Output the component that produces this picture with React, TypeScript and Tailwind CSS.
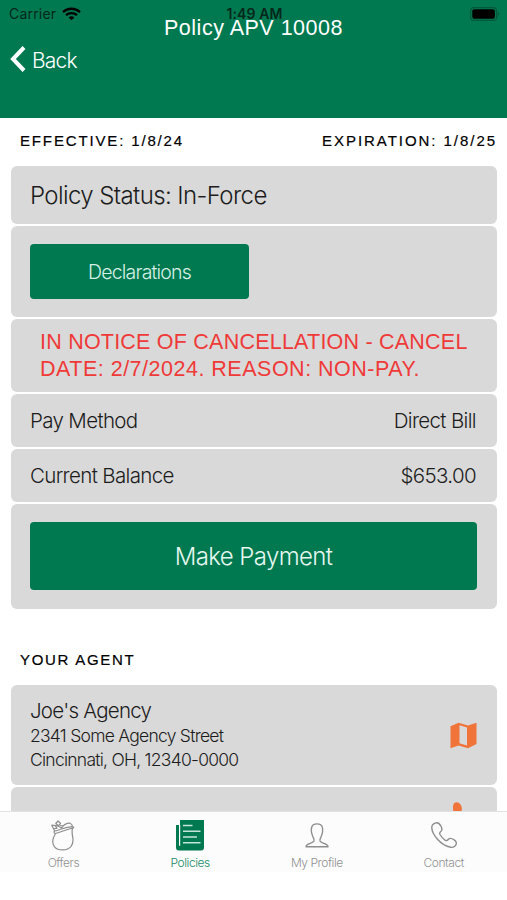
import type { ReactNode } from 'react';
import clsx from 'clsx';

const light = "font-['Inter','Liberation_Sans',sans-serif] font-light";
const label =
  "font-['Liberation_Sans',sans-serif] text-[15px] leading-[20px] text-black whitespace-nowrap [-webkit-text-stroke:0.2px_#000]";

const Card = ({ className, children }: { className?: string; children?: ReactNode }) => (
  <div className={clsx('w-[486px] shrink-0 rounded-[6px] bg-[#d9d9d9] text-[#1c1c1c]', light, className)}>{children}</div>
);

const StatusBar = () => (
  <div className="absolute inset-x-0 top-0 flex h-[27px] items-center justify-between pl-[9px] pr-[7px] font-['Inter','Liberation_Sans',sans-serif] text-[#06271b]">
    <div className="flex w-[150px] items-center gap-[6px]">
      <span className="text-[14px] tracking-[0.2px]">Carrier</span>
      <svg width="19" height="14" viewBox="0 0 19 14" fill="none" stroke="#000" strokeWidth="2.3">
        <path d="M1 5.1C5.8.6 13.2.6 18 5.1" />
        <path d="M4 8.2c3.1-2.9 7.900-2.900 11 0" />
        <path d="M9.500 13.200 6.700 10.400c1.600-1.400 4-1.400 5.600 0Z" fill="#000" stroke="none" />
      </svg>
    </div>
    <span className="text-[14px] font-semibold tracking-[0.100px]">1:49 AM</span>
    <div className="flex w-[150px] justify-end">
      <svg width="30" height="14" viewBox="0 0 30 14">
        <rect x="0.600" y="0.600" width="26" height="12.800" rx="3.500" fill="none" stroke="#02583d" strokeWidth="1.200" />
        <rect x="2.300" y="2.300" width="22.600" height="9.400" rx="2" fill="#000" />
        <path d="M28 5v4c1.700-.8 1.700-3.200 0-4Z" fill="#02583d" />
      </svg>
    </div>
  </div>
);

const OffersIcon = () => (
  <svg width="26" height="32" viewBox="0 0 26 32" fill="none" stroke="#8e8e8e" strokeWidth="1.200" strokeLinejoin="round">
    <path d="M5.500 13.500C11 12 16.500 9.500 22.500 8c-.8 3.500-.5 6 .3 9.500.6 4 .2 6.500-1.800 9-3.500 4.500-13 4.500-16.500.3C.8 22 3 17.500 5.500 13.500Z" />
    <path d="M5.500 13.500C4 13.500 3.500 12 4.700 11 10 10 15 6.800 22.500 6.600c1.500.2 1.500 1.500 0 1.700" />
    <path d="M4.700 11 1.800 5.200l5.700.6L12 8.300M5 5.500l2 2.800-3 .2M11.500 8.300C13 5 17 2.800 20 3.200c1.500.5 2.300 1.800 2.500 3.400M13.500 6 10 5.500" />
    <path d="m8 1 2.500 2.300L8.500 5.800 5.800 3.500Z" />
  </svg>
);

const PoliciesIcon = () => (
  <svg width="28" height="31" viewBox="0 0 28 31">
    <path d="M4 0h24v27.500a3 3 0 0 1-3 3H3a3 3 0 0 1-3-3V5h4Z" fill="#007950" />
    <path d="M3.600 5v20.800" stroke="#fff" strokeWidth="1.200" />
    <path d="M7 5.500h9.500M7 11.300h17.500M7 17h14M7 22.800h17.500" stroke="#c4e6d9" strokeWidth="1.500" />
  </svg>
);

const ProfileIcon = () => (
  <svg width="24" height="25" viewBox="0 0 24 25" fill="none" stroke="#8e8e8e" strokeWidth="1.400" strokeLinejoin="round">
    <path d="M1 23.800c.2-3.600 6.500-3 8-5.800.5-1.500-.3-2.600-1-4C6.500 10.500 5.800 7.500 6.600 4.500 7.200 2 9.300.9 12 .9s4.800 1.100 5.400 3.600c.8 3 .1 6-1.400 9.500-.7 1.400-1.500 2.500-1 4 1.500 2.800 7.800 2.200 8 5.800Z" />
  </svg>
);

const ContactIcon = () => (
  <svg width="26" height="27" viewBox="0 0 26 27" fill="none" stroke="#8e8e8e" strokeWidth="1.400" strokeLinejoin="round">
    <path d="M4.800.9C2 1.800.6 4 .8 6c.2 5.700 8 17 19 19.300 2.700.3 4.600-1.100 5.400-3.300.5-2-.2-3-2-4.200-2-1.300-4.500-1.900-5.700-.6-1 1.300-2 2-3.500 1-1.700-1.200-3.700-3.600-5-5.700-.8-1.500-.2-2.300 1-3.200 1.500-1.200.8-3.500-.2-5.500C8.500 1.500 7.200.3 4.800.9Z" />
  </svg>
);

const tabs = [
  { name: 'Offers', icon: <OffersIcon />, active: false },
  { name: 'Policies', icon: <PoliciesIcon />, active: true },
  { name: 'My Profile', icon: <ProfileIcon />, active: false },
  { name: 'Contact', icon: <ContactIcon />, active: false },
];

const App = () => {
  return (
    <div className="relative flex h-[900px] w-[507px] flex-col overflow-hidden bg-white">
      <header className="relative h-[118px] shrink-0 bg-[#007950] text-white">
        <StatusBar />
        <h1 className="relative pt-[15px] text-center font-['Liberation_Sans',sans-serif] text-[21.500px] leading-[26px] tracking-[0.500px]">
          Policy APV 10008
        </h1>
        <button className={clsx('mt-[5px] flex items-center gap-[6px] pl-[10px] text-[21px] leading-[30px] tracking-[-0.800px]', light)}>
          <svg width="16" height="26" viewBox="0 0 16 26" fill="none" stroke="#fff" strokeWidth="4" className="-mt-[4px]">
            <path d="M14 1.500 3 13l11 11.500" />
          </svg>
          Back
        </button>
      </header>

      <main className="flex min-h-0 flex-1 flex-col gap-[2px] overflow-hidden pl-[11px]">
        <div className="flex h-[46px] w-[486px] shrink-0 justify-between pl-[9px] pt-[13px]">
          <span className={clsx(label, 'tracking-[1.850px]')}>EFFECTIVE: 1/8/24</span>
          <span className={clsx(label, 'tracking-[1.950px]')}>EXPIRATION: 1/8/25</span>
        </div>

        <Card className="flex h-[58px] items-center px-[19px] pt-[2px] text-[24px] tracking-[-0.600px]">Policy Status: In-Force</Card>
        <Card className="h-[91px] px-[19px] pt-[18px]">
          <button className="h-[55px] w-[219px] rounded-[4px] bg-[#007950] pt-[3px] text-[19.500px] tracking-[-0.800px] text-[#d5f0e5]">
            Declarations
          </button>
        </Card>
        <Card className="h-[73px] pl-[29px] pt-[10px]">
          <p className="whitespace-nowrap font-['Liberation_Sans',sans-serif] text-[21.500px] leading-[27px] text-[#ef3a38]">
            <span className="tracking-[0.220px]">IN NOTICE OF CANCELLATION - CANCEL</span>
            <br />
            <span className="tracking-[0.500px]">DATE: 2/7/2024. REASON: NON-PAY.</span>
          </p>
        </Card>
        <Card className="flex h-[53px] items-center justify-between pl-[19px] pr-[21px] pt-[2px] text-[20.500px] tracking-[-0.650px]">
          <span>Pay Method</span>
          <span>Direct Bill</span>
        </Card>
        <Card className="flex h-[53px] items-center justify-between pl-[19px] pr-[21px] pt-[2px] text-[20.500px] tracking-[-0.650px]">
          <span>Current Balance</span>
          <span>$653.00</span>
        </Card>
        <Card className="h-[105px] px-[19px] pt-[18px]">
          <button className="h-[68px] w-[447px] rounded-[4px] bg-[#007950] pt-[2px] text-[24px] tracking-[-0.600px] text-[#e5f7ef]">
            Make Payment
          </button>
        </Card>

        <h2 className={clsx(label, 'mb-[10px] ml-[9px] mt-[39px] h-[23px] shrink-0 tracking-[1.700px]')}>YOUR AGENT</h2>

        <Card className="flex h-[100px] items-center justify-between pl-[19px] pr-[20px]">
          <div className="text-[17.500px] leading-[24px] tracking-[-0.740px]">
            <p className="-mt-px text-[20.500px] leading-[27px] tracking-[-0.750px]">Joe's Agency</p>
            <p>2341 Some Agency Street</p>
            <p>Cincinnati, OH, 12340-0000</p>
          </div>
          <svg width="27" height="27" viewBox="0 0 27 27" fill="#f0743a">
            <path fillRule="evenodd" d="M.5 4.200 8.500.8l9.500 2.700L26.500.8V22L18 26.200l-9.500-2.700L.5 26.200ZM9.500 3.200v18l7.500 2.300v-18Z" />
          </svg>
        </Card>
        <Card className="flex h-[60px] justify-end pr-[32px] pt-[15px]">
          <svg width="13" height="24" viewBox="0 0 13 24" fill="#f0743a">
            <path d="M2.500.8C5.500-.7 8.500 1 9.500 4.500c1 3.500 0 4.500-1.500 6.500L3 13C.5 9 .2 3 2.500.8Z" />
          </svg>
        </Card>
      </main>

      <nav className="flex h-[89px] shrink-0 border-t border-[#e2e2e2] bg-[linear-gradient(#fcfcfc_60px,#fff_60px)]">
        {tabs.map((tab) => (
          <div key={tab.name} className="flex flex-1 flex-col items-center pt-[6px]">
            <div className="flex h-[35px] items-center">{tab.icon}</div>
            <span className={clsx('text-[12px] leading-[20px] tracking-[-0.450px]', light, tab.active ? 'text-[#208b67]' : 'text-[#929292]')}>
              {tab.name}
            </span>
          </div>
        ))}
      </nav>
    </div>
  );
};

export default App;
